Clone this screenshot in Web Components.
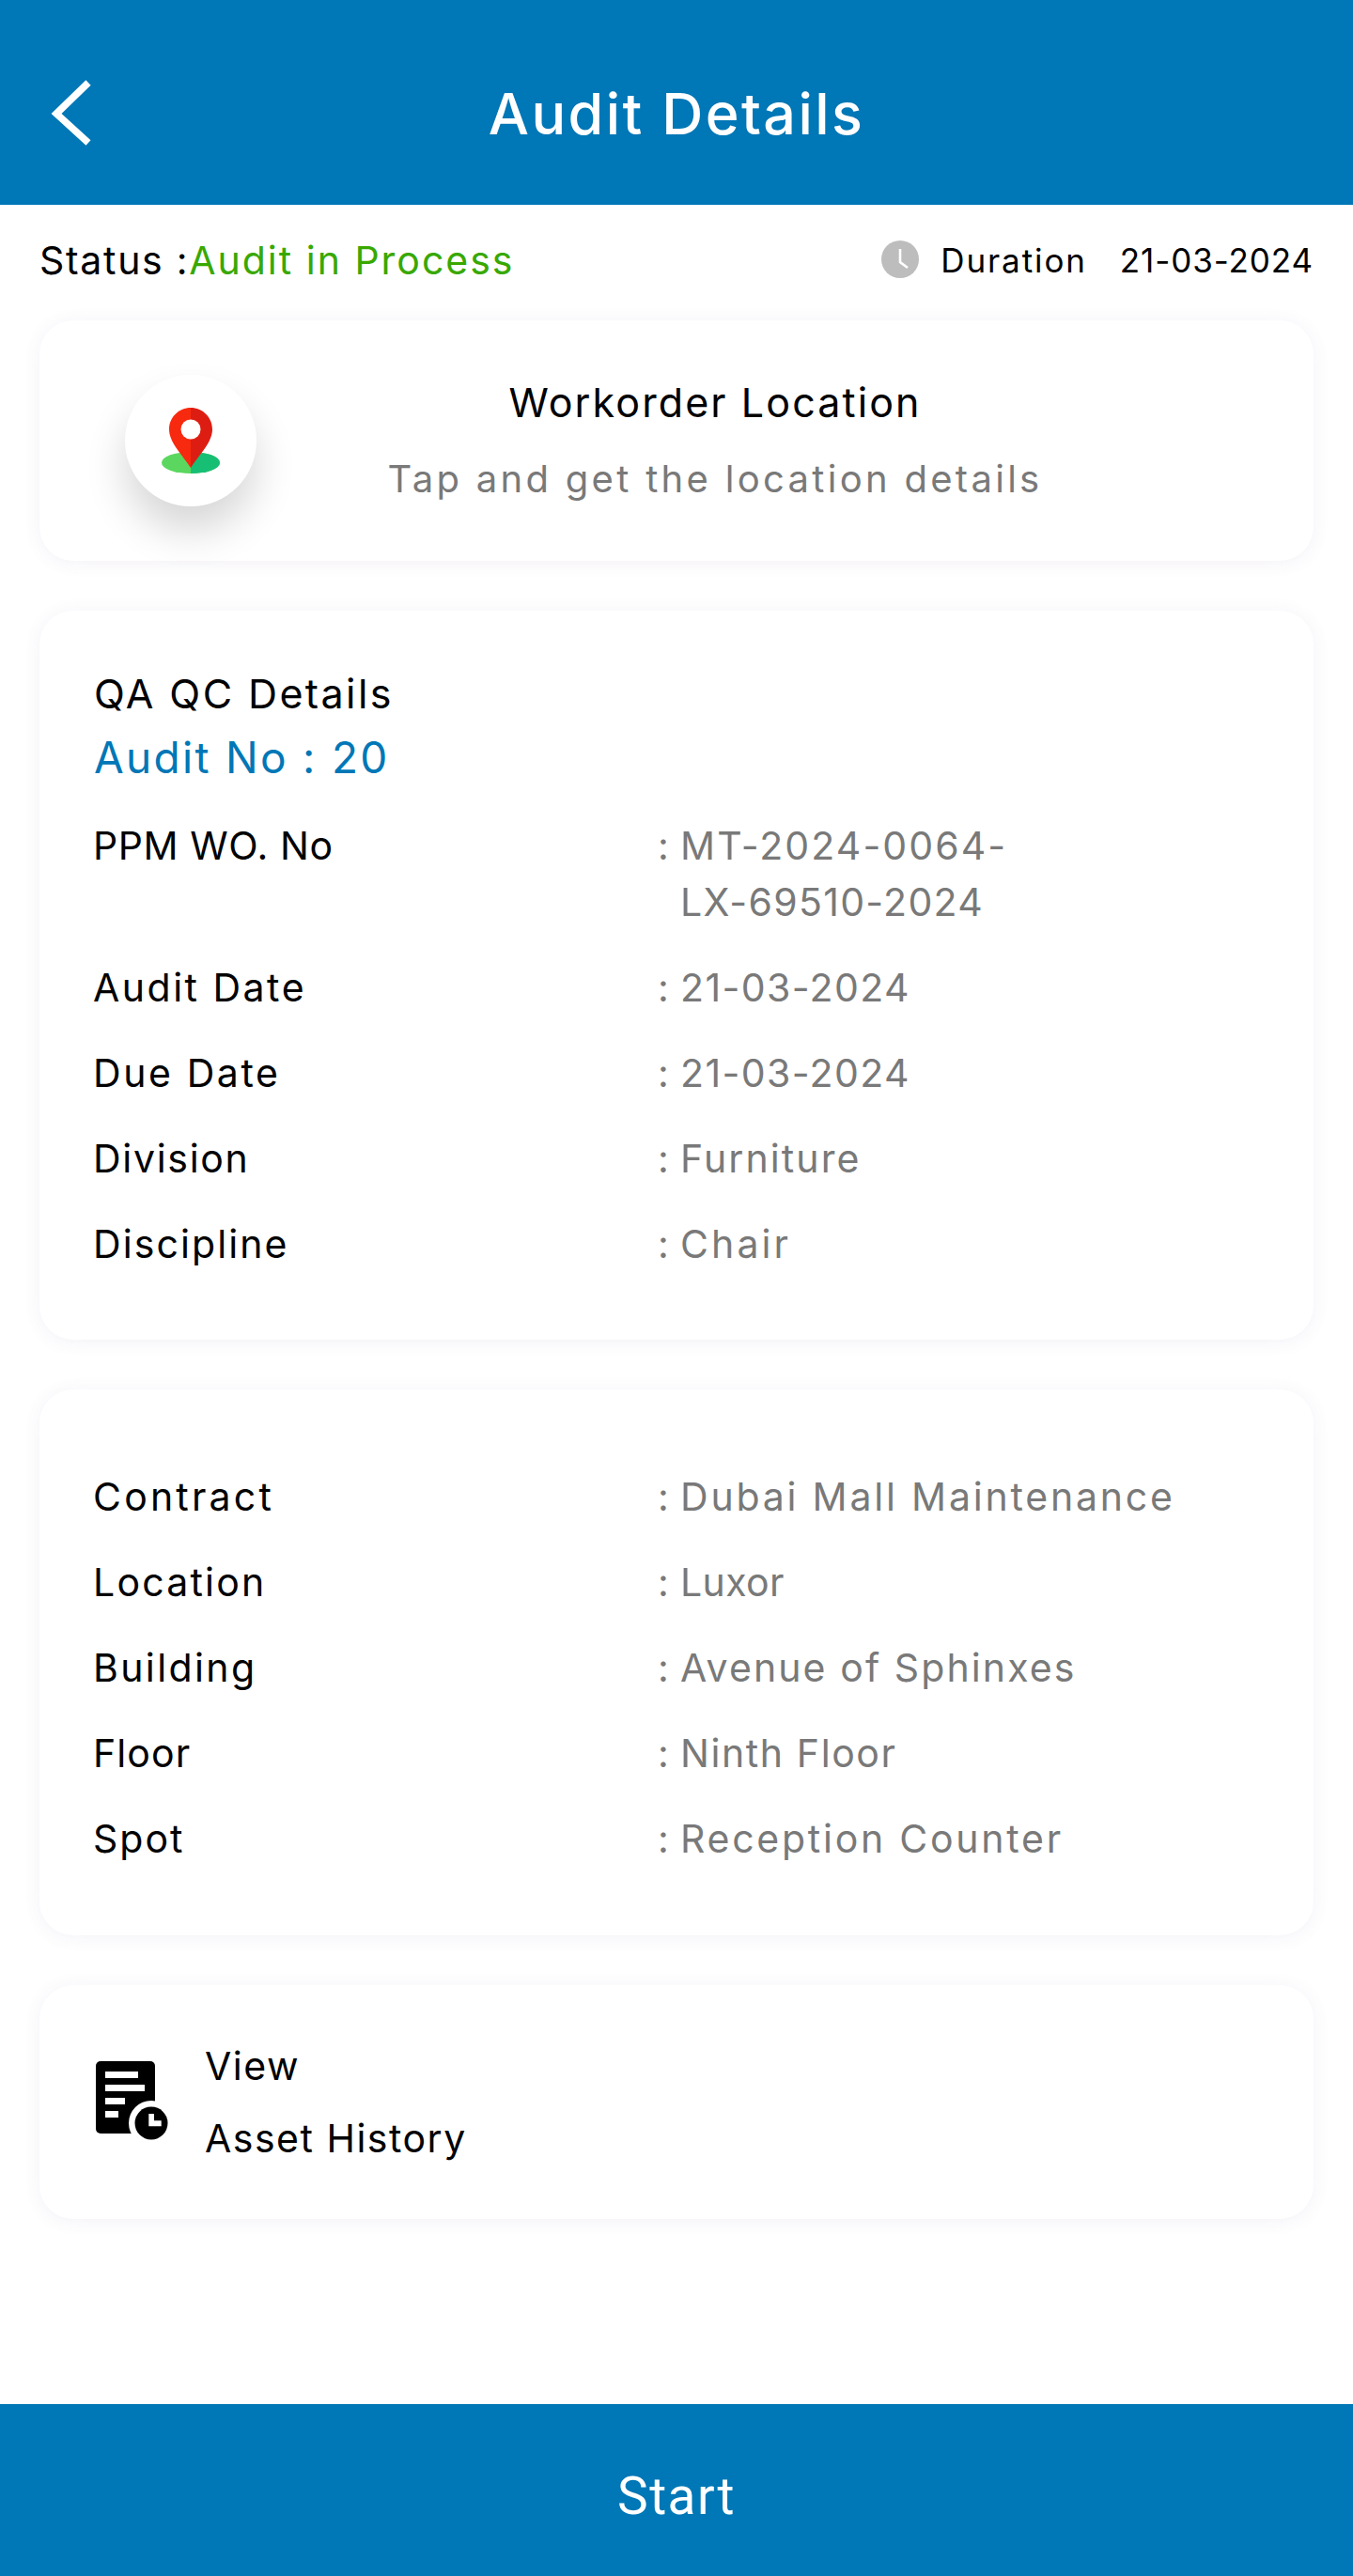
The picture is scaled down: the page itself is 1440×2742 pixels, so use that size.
<!DOCTYPE html>
<html>
<head>
<meta charset="utf-8">
<title>Audit Details</title>
<style>
  html, body { margin: 0; padding: 0; background: #fff; }
  body { width: 1440px; height: 2742px; font-family: Inter, "Open Sans", sans-serif; display: flex; flex-direction: column; }
  .cards { flex: 1; display: flex; flex-direction: column; gap: 53px; padding: 0 42px; }
  .qa { font-size: 43px; line-height: 60px; letter-spacing: 2.4px; color: #000; }
  .no { font-size: 46px; line-height: 60px; letter-spacing: 2.3px; color: #0077b6; margin: 8px 0 34px; }
  .mt { letter-spacing: 2.1px; }
  .lx { letter-spacing: 1.3px; }
</style>
</head>
<body>
<app-header>Audit Details</app-header>
<status-bar status="Audit in Process" date="21-03-2024"></status-bar>
<div class="cards">
  <location-card></location-card>
  <info-card style="--pad-top:58px;--pad-bottom:72px">
    <div slot="head" class="qa">QA QC Details</div>
    <div slot="head" class="no">Audit No : 20</div>
    <detail-row label="PPM WO. No" style="--l:.6px"><span class="mt">MT-2024-0064-</span><br><span class="lx">LX-69510-2024</span></detail-row>
    <detail-row label="Audit Date" style="--l:2.5px;--v:1.4px">21-03-2024</detail-row>
    <detail-row label="Due Date" style="--l:2.6px;--v:1.4px">21-03-2024</detail-row>
    <detail-row label="Division" style="--l:1.7px;--v:2.1px">Furniture</detail-row>
    <detail-row label="Discipline" style="--l:2.1px;--v:3.1px">Chair</detail-row>
  </info-card>
  <info-card style="--pad-top:84px;--pad-bottom:73px">
    <detail-row label="Contract" style="--l:3.2px;--v:2.8px">Dubai Mall Maintenance</detail-row>
    <detail-row label="Location" style="--l:2.2px;--v:.4px">Luxor</detail-row>
    <detail-row label="Building" style="--l:2.4px;--v:2.1px">Avenue of Sphinxes</detail-row>
    <detail-row label="Floor" style="--l:1.1px;--v:1.6px">Ninth Floor</detail-row>
    <detail-row label="Spot" style="--l:2px;--v:2.75px">Reception Counter</detail-row>
  </info-card>
  <history-card></history-card>
</div>
<start-button>Start</start-button>

<script>
class AppHeader extends HTMLElement {
  constructor() {
    super();
    this.attachShadow({ mode: "open" });
    this.shadowRoot.innerHTML = `
    <style>
      :host { display: flex; position: relative; height: 218px; background: #0077b6; color: #fff; align-items: center; justify-content: center; }
      .title { font-size: 61px; font-weight: 500; letter-spacing: 2.4px; margin-top: 23px; }
      svg { position: absolute; left: 53px; top: 84px; }
    </style>
    <svg width="50" height="72" viewBox="0 0 50 72"><path d="M41 4 L7 37 L41 68" fill="none" stroke="#fff" stroke-width="7.5"/></svg>
    <div class="title"><slot></slot></div>`;
  }
}

class StatusBar extends HTMLElement {
  constructor() {
    super();
    this.attachShadow({ mode: "open" });
    this.shadowRoot.innerHTML = `
    <style>
      :host { display: flex; height: 123px; padding: 0 42px; box-sizing: border-box; align-items: flex-start; justify-content: space-between; }
      .left { font-size: 41px; line-height: 60px; margin-top: 29px; letter-spacing: 1.7px; color: #000; }
      .left span { color: #38a800; letter-spacing: 2px; }
      .right { display: flex; align-items: center; margin-top: 29px; height: 60px; font-size: 35px; color: #000; }
      svg { margin-right: 23px; margin-top: -3px; }
      .dur { letter-spacing: 1.9px; }
      .date { margin-left: 35px; letter-spacing: .9px; }
    </style>
    <div class="left">Status :<span class="val"></span></div>
    <div class="right">
      <svg width="40" height="40" viewBox="0 0 40 40"><circle cx="20" cy="20" r="20" fill="#bdbdbd"/><path d="M20 9 V23 L28 29" fill="none" stroke="#fff" stroke-width="2.6"/></svg>
      <span class="dur">Duration</span><span class="date"></span>
    </div>`;
  }
  connectedCallback() {
    this.shadowRoot.querySelector(".val").textContent = this.getAttribute("status");
    this.shadowRoot.querySelector(".date").textContent = this.getAttribute("date");
  }
}

class LocationCard extends HTMLElement {
  constructor() {
    super();
    this.attachShadow({ mode: "open" });
    this.shadowRoot.innerHTML = `
    <style>
      :host { display: flex; position: relative; height: 256px; background: #fff; border-radius: 36px; box-shadow: 0 2px 18px rgba(120,90,160,.09); align-items: center; }
      .pin { position: absolute; left: 91px; top: 58px; width: 140px; height: 140px; border-radius: 50%; background: #fff; box-shadow: 0 26px 44px rgba(0,0,0,.16); display: flex; align-items: center; justify-content: center; }
      .text { margin-left: 233px; flex: 1; margin-right: 151px; text-align: center; white-space: nowrap; }
      .t { font-size: 43px; line-height: 60px; letter-spacing: 2.1px; color: #000; }
      .s { font-size: 40px; line-height: 60px; letter-spacing: 3.3px; color: #797979; margin-top: 22px; }
    </style>
    <div class="pin">
      <svg width="62" height="70" viewBox="0 0 62 70">
        <ellipse cx="31" cy="58.500" rx="31" ry="11.500" fill="#5bd75f"/>
        <path d="M31 47 A31 11.500 0 0 1 31 70 Z" fill="#17bf75"/>
        <path d="M31 0 C18.500 0 8 10 8 23 C8 37 22 50 31 64 Z" fill="#f7290f"/>
        <path d="M31 0 C43.500 0 54 10 54 23 C54 37 40 50 31 64 Z" fill="#dd1d12"/>
        <circle cx="31" cy="23" r="10.500" fill="#fff"/>
      </svg>
    </div>
    <div class="text"><div class="t">Workorder Location</div><div class="s">Tap and get the location details</div></div>`;
  }
}

class InfoCard extends HTMLElement {
  constructor() {
    super();
    this.attachShadow({ mode: "open" });
    this.shadowRoot.innerHTML = `
    <style>
      :host { display: block; background: #fff; border-radius: 36px; box-shadow: 0 2px 18px rgba(120,90,160,.09); padding: var(--pad-top) 58px var(--pad-bottom); }
      .rows { display: flex; flex-direction: column; gap: 31px; }
    </style>
    <slot name="head"></slot>
    <div class="rows"><slot></slot></div>`;
  }
}

class DetailRow extends HTMLElement {
  constructor() {
    super();
    this.attachShadow({ mode: "open" });
    this.shadowRoot.innerHTML = `
    <style>
      :host { display: flex; font-size: 41px; line-height: 60px; }
      .label { width: 601px; color: #000; flex: none; letter-spacing: var(--l, 1.1px); margin-left: -1px; }
      .colon { width: 24px; color: #797979; flex: none; }
      .val { color: #797979; letter-spacing: var(--v, 1.1px); white-space: nowrap; }
    </style>
    <div class="label"></div><div class="colon">:</div><div class="val"><slot></slot></div>`;
  }
  connectedCallback() {
    this.shadowRoot.querySelector(".label").textContent = this.getAttribute("label");
  }
}

class HistoryCard extends HTMLElement {
  constructor() {
    super();
    this.attachShadow({ mode: "open" });
    this.shadowRoot.innerHTML = `
    <style>
      :host { display: flex; height: 249px; background: #fff; border-radius: 36px; box-shadow: 0 2px 18px rgba(120,90,160,.09); align-items: center; padding-left: 58px; }
      svg { flex: none; margin-right: 38px; margin-top: -4px; }
      .text { font-size: 41px; line-height: 77px; letter-spacing: 1.5px; color: #000; }
    </style>
    <svg width="80" height="84" viewBox="0 0 80 84">
      <rect x="2" y="0" width="63" height="77" rx="5" fill="#000"/>
      <g fill="#fff"><rect x="12" y="11" width="35" height="7"/><rect x="12" y="25" width="42" height="7"/><rect x="12" y="39" width="21" height="7"/><rect x="12" y="53" width="14" height="7"/></g>
      <circle cx="61" cy="66" r="24" fill="#fff"/>
      <circle cx="61" cy="66" r="17.500" fill="#000"/>
      <path d="M58.300 56 H64 V63.300 H71.700 V69.300 H58.300 Z" fill="#fff"/>
    </svg>
    <div class="text">View<br>Asset History</div>`;
  }
}

class StartButton extends HTMLElement {
  constructor() {
    super();
    this.attachShadow({ mode: "open" });
    this.shadowRoot.innerHTML = `
    <style>
      :host { display: flex; height: 183px; box-sizing: border-box; padding-top: 13px; background: #0077b6; color: #fff; align-items: center; justify-content: center; font-family: Roboto, sans-serif; font-size: 55px; letter-spacing: 1.5px; }
    </style>
    <slot></slot>`;
  }
}

customElements.define("app-header", AppHeader);
customElements.define("status-bar", StatusBar);
customElements.define("location-card", LocationCard);
customElements.define("info-card", InfoCard);
customElements.define("detail-row", DetailRow);
customElements.define("history-card", HistoryCard);
customElements.define("start-button", StartButton);
</script>
</body>
</html>
